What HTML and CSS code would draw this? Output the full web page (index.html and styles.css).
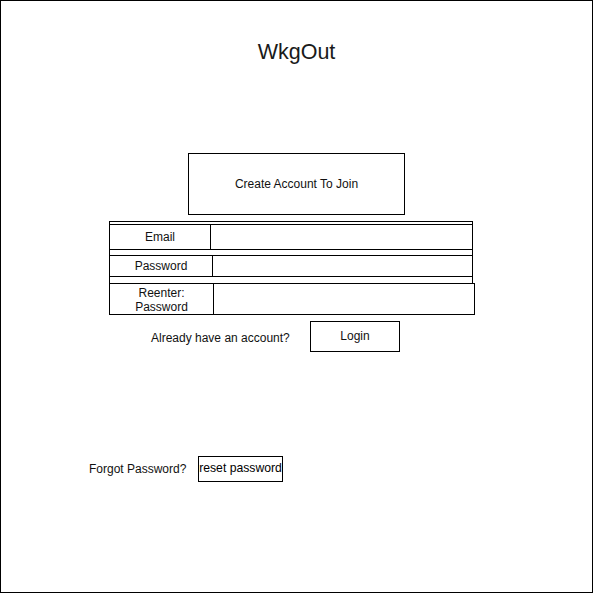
FILE: index.html
```html
<!DOCTYPE html>
<html>
<head>
    <title>WkgOut - Create Account</title>
    <link rel="stylesheet" href="styles.css">
</head>
<body>
    <div class="frame">
        <h1 class="title">WkgOut</h1>

        <div class="create-box">Create Account To Join</div>

        <div class="form-table">
            <div class="row row-email">
                <div class="label label-email">Email</div>
                <div class="input"></div>
            </div>
            <div class="row row-password">
                <div class="label label-password">Password</div>
                <div class="input"></div>
            </div>
        </div>

        <div class="reenter">
            <div class="label label-reenter">Reenter:<br>Password</div>
            <div class="input"></div>
        </div>

        <div class="login-row">
            <span class="hint">Already have an account?</span>
            <div class="btn btn-login">Login</div>
        </div>

        <div class="forgot-row">
            <span class="hint-forgot">Forgot Password?</span>
            <div class="btn btn-reset">reset password</div>
        </div>
    </div>
</body>
</html>
```

FILE: styles.css
```css
* {
    box-sizing: border-box;
}
body {
    margin: 0;
    background: #fff;
    font-family: "Liberation Sans", Arial, sans-serif;
    font-size: 12px;
    color: #111;
}
.frame {
    width: 593px;
    height: 593px;
    border: 1px solid #000;
    display: flex;
    flex-direction: column;
    align-items: flex-start;
}
.title {
    margin: 39px 0 0 0;
    width: 100%;
    text-align: center;
    font-size: 21.5px;
    font-weight: normal;
    line-height: 24px;
    color: #1a1a1a;
}
.create-box {
    margin: 89px 0 0 187px;
    width: 217px;
    height: 62px;
    border: 1px solid #000;
    display: flex;
    align-items: center;
    justify-content: center;
}
.form-table {
    margin: 6px 0 0 108px;
    width: 364px;
    height: 63px;
    border: 1px solid #000;
    padding-top: 2px;
}
.row {
    display: flex;
    border-top: 1px solid #000;
    border-bottom: 1px solid #000;
}
.row-email {
    height: 26px;
}
.row-password {
    height: 22px;
    margin-top: 5px;
}
.label {
    display: flex;
    align-items: center;
    justify-content: center;
    text-align: center;
    border-right: 1px solid #000;
}
.label-email { width: 101px; }
.label-password { width: 103px; }
.input {
    flex: 1;
}
.reenter {
    margin: -1px 0 0 108px;
    width: 366px;
    height: 32px;
    border: 1px solid #000;
    display: flex;
}
.label-reenter {
    width: 104px;
    line-height: 14px;
    padding-top: 1px;
}
.login-row {
    margin: 6px 0 0 150px;
    display: flex;
    align-items: center;
}
.hint {
    width: 159px;
    padding-top: 3px;
}
.btn {
    border: 1px solid #000;
    display: flex;
    justify-content: center;
}
.btn-login {
    width: 90px;
    height: 31px;
    align-items: center;
    padding-bottom: 2px;
}
.forgot-row {
    margin: 104px 0 0 88px;
    display: flex;
    align-items: center;
}
.hint-forgot {
    width: 109px;
}
.btn-reset {
    width: 85px;
    height: 26px;
    align-items: flex-start;
    padding-top: 3px;
    line-height: 16px;
    font-size: 12.2px;
    color: #000;
    white-space: nowrap;
}
```
